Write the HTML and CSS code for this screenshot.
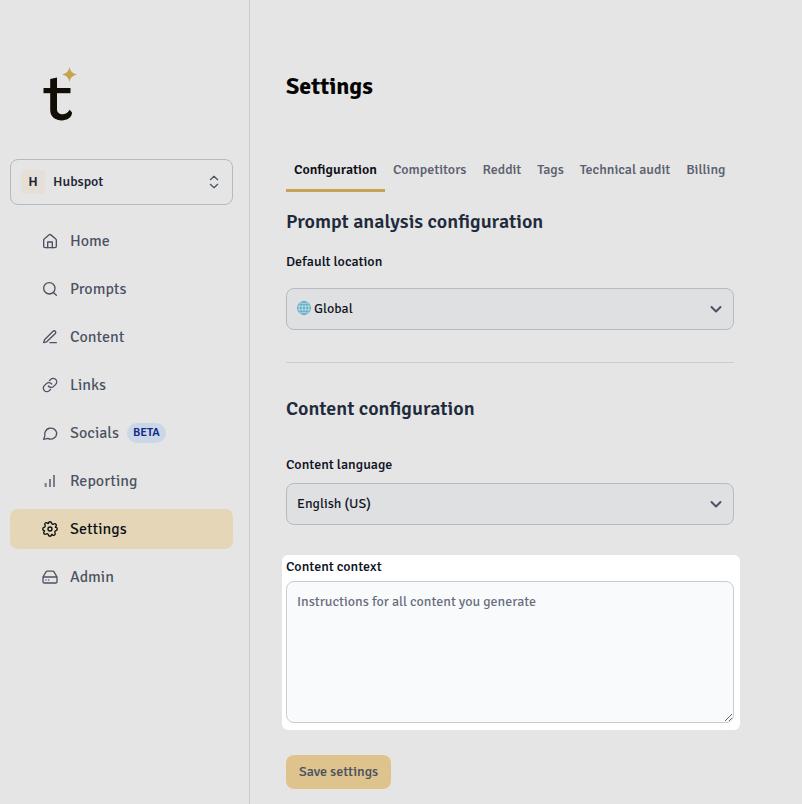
FILE: index.html
```html
<!DOCTYPE html>
<html lang="en">
<head>
<meta charset="utf-8">
<meta name="viewport" content="width=device-width, initial-scale=1">
<title>Settings</title>
<link rel="stylesheet" href="styles.css">
</head>
<body>
<div class="app">
  <aside class="sidebar">
    <a class="logo" href="#" aria-label="Dashboard">
      <svg width="40" height="60" viewBox="0 0 40 60" fill="none">
        <path d="M10.200 15.100 17 13.500V45.500C17 51 26 52.500 29.700 45.700L32 48.600C32.300 59 10.200 60 10.200 46Z" fill="#120e05"/>
        <rect x="3.500" y="24" width="27" height="5.200" fill="#120e05"/>
        <path d="M29.500 3C30.800 7.800 32.200 9.200 37 10.500 32.200 11.800 30.800 13.200 29.500 18 28.200 13.200 26.800 11.800 22 10.500 26.800 9.200 28.200 7.800 29.500 3Z" fill="#c9a152"/>
      </svg>
    </a>
    <button class="workspace" type="button">
      <span class="workspace-badge">H</span>
      <span class="workspace-name">Hubspot</span>
      <svg class="icon" viewBox="0 0 24 24"><path d="M6.500 8.500 12 3.500l5.500 5M6.500 15.500l5.500 5 5.500-5"/></svg>
    </button>
    <nav class="nav">
      <a class="nav-link" href="#"><svg class="icon" viewBox="0 0 24 24"><path d="M2.500 10.500V20a2 2 0 0 0 2 2h15a2 2 0 0 0 2-2v-9.500a2 2 0 0 0-.8-1.500L13.300 2.800a2 2 0 0 0-2.600 0L3.300 9a2 2 0 0 0-.8 1.500Z"/><path d="M8.500 22v-8.500h7V22"/></svg>Home</a>
      <a class="nav-link" href="#"><svg class="icon" viewBox="0 0 24 24"><circle cx="11" cy="11" r="8.500"/><path d="m17.500 17.500 4 4"/></svg>Prompts</a>
      <a class="nav-link" href="#"><svg class="icon" viewBox="0 0 24 24"><path d="M12 20.500h9.500M16.500 3.500a2.300 2.300 0 0 1 3.500 3.300L7 19.200l-4.500 1.300L3.800 16Z"/></svg>Content</a>
      <a class="nav-link" href="#"><svg class="icon" viewBox="0 0 24 24"><path d="M9.500 13.500a5.300 5.300 0 0 0 8 .6l3-3a5.300 5.300 0 0 0-7.500-7.500l-1.900 1.900"/><path d="M14.500 10.500a5.300 5.300 0 0 0-8-.6l-3 3a5.300 5.300 0 0 0 7.500 7.500l1.900-1.900"/></svg>Links</a>
      <a class="nav-link" href="#"><svg class="icon" viewBox="0 0 24 24"><path d="M22 11.500a9 9 0 0 1-13.200 8.500L2.500 21.500 4.300 16A9 9 0 1 1 22 11.500Z"/></svg>Socials<span class="beta">BETA</span></a>
      <a class="nav-link" href="#"><svg class="icon icon-bars" viewBox="0 0 24 24"><path d="M5.500 21v-6M12 21V9M18 21V3"/></svg>Reporting</a>
      <a class="nav-link active" href="#" aria-current="page"><svg class="icon" viewBox="0 0 24 24"><path d="M9.700 3C10.300.5 13.700.5 14.300 3 14.700 4.600 16.500 5.300 17.900 4.500 20.100 3.100 22.500 5.500 21.100 7.700 20.300 9.100 19.400 9.300 21 9.700 23.500 10.300 23.500 13.700 21 14.300 19.400 14.700 18.700 16.500 19.500 17.900 20.900 20.100 18.500 22.500 16.300 21.100 14.900 20.300 14.700 19.400 14.300 21 13.700 23.500 10.300 23.500 9.700 21 9.300 19.400 7.500 18.700 6.100 19.500 3.900 20.900 1.500 18.500 2.900 16.300 3.700 14.900 4.600 14.700 3 14.300.5 13.700.5 10.300 3 9.700 4.600 9.300 5.300 7.500 4.500 6.100 3.100 3.900 5.500 1.500 7.700 2.900 9.100 3.700 9.300 4.600 9.700 3Z"/><circle cx="12" cy="12" r="3"/></svg>Settings</a>
      <a class="nav-link" href="#"><svg class="icon" viewBox="0 0 24 24"><path d="M1.500 12h21M6 4.300 1.500 12v7a2 2 0 0 0 2 2h17a2 2 0 0 0 2-2v-7L18 4.300A2 2 0 0 0 16.300 3.300H7.700A2 2 0 0 0 6 4.300ZM6 16.500h.1M10 16.500h.1"/></svg>Admin</a>
    </nav>
  </aside>
  <main class="main">
    <h1>Settings</h1>
    <nav class="tabs" aria-label="Settings sections">
      <a class="tab selected" href="#" aria-current="page">Configuration</a>
      <a class="tab" href="#">Competitors</a>
      <a class="tab" href="#">Reddit</a>
      <a class="tab" href="#">Tags</a>
      <a class="tab" href="#">Technical audit</a>
      <a class="tab" href="#">Billing</a>
    </nav>
    <form>
      <section class="prompt-section">
        <h2>Prompt analysis configuration</h2>
        <label for="location">Default location</label>
        <div class="select-wrap with-globe">
          <svg class="globe" width="14" height="14" viewBox="0 0 14 14"><circle cx="7" cy="7" r="6.500"/><ellipse cx="7" cy="7" rx="3.300" ry="6.500"/><path d="M7 .5v13M.5 7h13M1.500 3.800h11M1.500 10.200h11"/></svg>
          <select id="location"><option>Global</option></select>
          <svg class="chevron" viewBox="0 0 12 12"><path d="m1.500 4 4.500 4.500L10.500 4"/></svg>
        </div>
      </section>
      <section class="content-section">
        <h2>Content configuration</h2>
        <label for="language">Content language</label>
        <div class="select-wrap">
          <select id="language"><option>English (US)</option></select>
          <svg class="chevron" viewBox="0 0 12 12"><path d="m1.500 4 4.500 4.500L10.500 4"/></svg>
        </div>
      </section>
      <div class="context">
        <label for="context">Content context</label>
        <textarea id="context" placeholder="Instructions for all content you generate"></textarea>
      </div>
      <button class="save" type="submit">Save settings</button>
    </form>
  </main>
</div>
</body>
</html>
```
FILE: styles.css
```css
* { box-sizing: border-box; }

body {
  margin: 0;
  background: #e5e5e5;
  color: #0f131f;
  font: 14px/20px "Signika Negative", Roboto, "Noto Sans", sans-serif;
}

button, select, textarea { font: inherit; color: inherit; }
a { color: inherit; text-decoration: none; }

.app { display: flex; min-height: 100vh; }

.sidebar {
  flex: 0 0 250px;
  padding: 64px 16px 16px 10px;
  border-right: 1px solid #cbccce;
}

.logo { display: block; width: 40px; margin-left: 30px; }
.logo svg { display: block; }

.workspace {
  display: flex;
  align-items: center;
  width: 100%;
  height: 46px;
  margin-top: 35px;
  padding: 0 10px;
  border: 1px solid #b7b9c2;
  border-radius: 8px;
  background: transparent;
  font-weight: 500;
  color: #1c2536;
}

.workspace-badge {
  width: 24px;
  height: 24px;
  border-radius: 4px;
  background: #e6dfd7;
  line-height: 24px;
  text-align: center;
  font-weight: 600;
}

.workspace-name { flex: 1; margin-left: 8px; text-align: left; }

.icon {
  flex: none;
  width: 16px;
  height: 16px;
  fill: none;
  stroke: currentColor;
  stroke-width: 2;
  stroke-linecap: round;
  stroke-linejoin: round;
}
.workspace .icon { color: #4b5563; }
.icon-bars { stroke-width: 3; stroke-linecap: butt; opacity: .7; }

.nav { display: grid; gap: 8px; margin-top: 16px; }

.nav-link {
  display: flex;
  align-items: center;
  gap: 12px;
  height: 40px;
  padding-left: 32px;
  border-radius: 8px;
  font-size: 16px;
  color: #4b5262;
}
.nav-link.active { background: #e5d6b7; color: #0d0f15; }

.beta {
  margin-left: -4px;
  padding: 0 6px;
  border-radius: 10px;
  background: #cad7e6;
  color: #14288c;
  font-size: 12px;
  line-height: 20px;
  font-weight: 600;
}

.main { flex: 1; min-width: 0; max-width: 520px; padding: 70px 36px 15px; }

h1 { margin: 0; font-size: 24px; line-height: 32px; font-weight: 700; color: #050505; }

.tabs { display: flex; margin-top: 48px; }
.tab {
  padding: 10px 8px 9px;
  border-bottom: 3px solid transparent;
  font-weight: 500;
  white-space: nowrap;
  color: #5a6070;
}
.tab.selected { border-color: #c9a152; font-weight: 600; color: #0d0f15; }

h2 { margin: 0; font-size: 20px; line-height: 28px; font-weight: 600; color: #202a3b; }
label { display: block; font-weight: 500; }

.prompt-section { padding: 16px 0 32px; border-bottom: 1px solid #cbccce; }
.prompt-section label { margin: 16px 0; }
.content-section { padding-top: 32px; }
.content-section label { margin: 32px 0 8px; }

.select-wrap { position: relative; }
select {
  display: block;
  width: 100%;
  height: 42px;
  padding: 0 32px 0 10px;
  border: 1px solid #b7bbc1;
  border-radius: 8px;
  background: #dfe0e2;
  appearance: none;
}
.with-globe select { padding-left: 27px; }
.globe {
  position: absolute;
  top: 13px;
  left: 11px;
  fill: #bfe0e8;
  stroke: #3f9bb8;
  stroke-width: .7;
}
.chevron {
  position: absolute;
  top: 15px;
  right: 12px;
  width: 12px;
  height: 12px;
  fill: none;
  stroke: #4b5262;
  stroke-width: 2;
  stroke-linecap: round;
  stroke-linejoin: round;
  pointer-events: none;
}

.context {
  margin: 30px -6px 0 -4px;
  padding: 2px 6px 7px 4px;
  border-radius: 6px;
  background: #fff;
}
textarea {
  display: block;
  width: 100%;
  height: 142px;
  margin-top: 4px;
  padding: 10px;
  border: 1px solid #c9ccd5;
  border-radius: 8px;
  background: #f9fafc;
  resize: vertical;
}
textarea::placeholder { color: #666c7b; opacity: 1; }

.save {
  height: 34px;
  margin-top: 25px;
  padding: 0 13px;
  border: 0;
  border-radius: 8px;
  background: #dec38d;
  color: #4b5262;
  font-weight: 500;
}
```
